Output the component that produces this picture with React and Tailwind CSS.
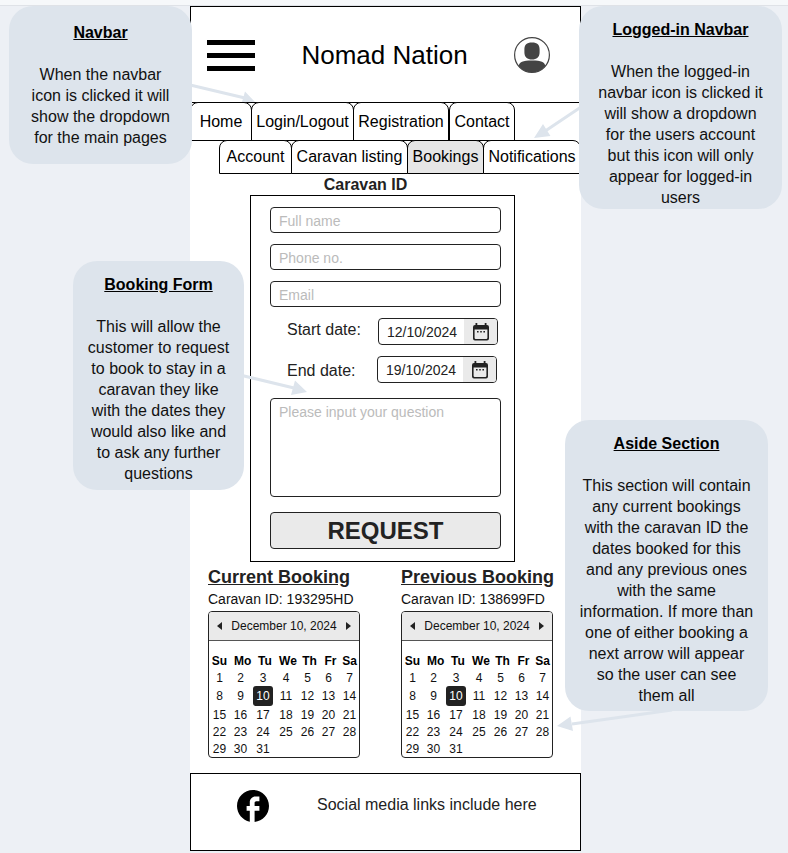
import React from "react";

const mainTabs = [
  { label: "Home", size: "w-[62px]" },
  { label: "Login/Logout", size: "w-[103px] -ml-px" },
  { label: "Registration", size: "w-[96px] -ml-px" },
  { label: "Contact", size: "w-[66px]" },
];

const accountTabs = [
  { label: "Account", size: "w-[73px]" },
  { label: "Caravan listing", size: "w-[117px] -ml-px" },
  { label: "Bookings", size: "w-[77px] -ml-px", active: true },
  { label: "Notifications", size: "w-[98px] -ml-px" },
];

const weekdays = ["Su", "Mo", "Tu", "We", "Th", "Fr", "Sa"];
const weeks = [
  [1, 2, 3, 4, 5, 6, 7],
  [8, 9, 10, 11, 12, 13, 14],
  [15, 16, 17, 18, 19, 20, 21],
  [22, 23, 24, 25, 26, 27, 28],
  [29, 30, 31, null, null, null, null],
];

function Tabs({ items, label, className }) {
  return (
    <nav aria-label={label} className={"-mt-px flex " + className}>
      {items.map((t) => (
        <a
          key={t.label}
          href="#"
          className={
            "flex shrink-0 items-center justify-center whitespace-nowrap rounded-t-lg border border-black text-base text-black " +
            t.size +
            (t.active ? " bg-[#e6e6e6]" : " bg-white")
          }
        >
          {t.label}
        </a>
      ))}
    </nav>
  );
}

function CalendarIcon() {
  return (
    <svg viewBox="0 0 16 18" className="h-[18px] w-4 shrink-0" aria-hidden="true">
      <path
        fill="#222"
        fillRule="evenodd"
        d="M2.500 0h1.800v2h7.400V0h1.800v2h.5a2 2 0 0 1 2 2v11.500a2 2 0 0 1-2 2H2a2 2 0 0 1-2-2V4a2 2 0 0 1 2-2h.5zM1.600 6.500v8.600c0 .5.3.8.8.8h11.200c.5 0 .8-.3.8-.8V6.500z"
      />
      <path fill="#222" d="M4 8h1.600v1.600H4zM7.200 8h1.600v1.600H7.200zM10.400 8h1.600v1.600h-1.600z" />
    </svg>
  );
}

function TextField({ label, type }) {
  return (
    <input
      type={type}
      aria-label={label}
      placeholder={label}
      className="h-[26px] w-full rounded border border-[#222] bg-white px-2 pt-0.5 text-sm text-[#222] outline-none placeholder:text-[#bbb]"
    />
  );
}

function DateField({ id, label, value, className }) {
  return (
    <div className={"flex justify-between pl-[17px] " + className}>
      <label htmlFor={id} className="text-base leading-6 text-[#222]">
        {label}
      </label>
      <div className="flex h-[27px] w-[120px] overflow-hidden rounded border border-[#222] bg-white">
        <input
          id={id}
          type="text"
          defaultValue={value}
          className="w-[85px] pl-2 text-sm text-[#222] outline-none"
        />
        <button
          type="button"
          aria-label={"Choose " + label}
          className="flex flex-1 items-center justify-center bg-[#eaeaea]"
        >
          <CalendarIcon />
        </button>
      </div>
    </div>
  );
}

function Arrow({ next }) {
  return (
    <svg viewBox="0 0 6 8" className="h-2 w-[6px]" aria-hidden="true">
      <path fill="#222" d={next ? "M1 0L6 4L1 8z" : "M5 0L0 4L5 8z"} />
    </svg>
  );
}

function Calendar() {
  return (
    <div className="rounded border border-[#222] bg-white text-xs text-[#111]">
      <div className="flex h-[29px] items-center justify-between rounded-t-[3px] border-b border-[#555] bg-[#eaeaea] px-2">
        <button type="button" aria-label="Previous month">
          <Arrow />
        </button>
        <span>December 10, 2024</span>
        <button type="button" aria-label="Next month">
          <Arrow next />
        </button>
      </div>
      <table className="mt-[11px] w-full table-fixed border-collapse text-center">
        <colgroup>
          <col className="w-[21px]" />
          <col className="w-[21px]" />
          <col className="w-[24px]" />
          <col className="w-[22px]" />
          <col className="w-[21px]" />
          <col className="w-[21px]" />
          <col className="w-[21px]" />
        </colgroup>
        <thead>
          <tr className="h-[17px]">
            {weekdays.map((d, i) => (
              <th
                key={d}
                className={
                  "p-0 leading-4 text-black " + (i > 0 && i < 6 ? "pl-1" : "")
                }
              >
                {d}
              </th>
            ))}
          </tr>
        </thead>
        <tbody>
          {weeks.map((w, r) => (
            <tr key={r} className={r === 1 ? "h-[20px]" : "h-[17px]"}>
              {w.map((d, i) => (
                <td key={i} className="p-0 leading-4">
                  {d === 10 ? (
                    <span className="mx-auto block w-5 rounded-[3px] bg-[#222] leading-5 text-white">
                      {d}
                    </span>
                  ) : (
                    d
                  )}
                </td>
              ))}
            </tr>
          ))}
        </tbody>
      </table>
    </div>
  );
}

function Booking({ title, caravan }) {
  return (
    <section className="w-[152px]">
      <h2 className="whitespace-nowrap text-lg font-bold leading-6 text-[#222] underline">
        {title}
      </h2>
      <p className="mb-[2px] whitespace-nowrap text-sm leading-5 text-[#111]">
        Caravan ID: {caravan}
      </p>
      <Calendar />
    </section>
  );
}

function Note({ title, className, children }) {
  return (
    <aside
      className={
        "absolute rounded-3xl bg-[#dde4ec] text-center text-base leading-[21px] text-[#111] " +
        className
      }
    >
      <h2 className="mb-[21px] font-bold leading-[21px] text-black underline">
        {title}
      </h2>
      <p>{children}</p>
    </aside>
  );
}

export default function App() {
  return (
    <div className="relative min-h-screen overflow-hidden bg-[#edf0f5] font-['Liberation_Sans',Arial,sans-serif]">
      <div className="h-[6px] border-b border-[#dfe2e7] bg-[#f6f8fa]" />

      <main className="ml-[190px] w-full max-w-[391px] bg-white">
        <header className="flex h-[97px] items-center justify-between border border-black pl-4 pr-[30px] pt-px">
          <button
            type="button"
            aria-label="Menu"
            className="flex w-12 flex-col gap-2"
          >
            <span className="h-[5px] bg-black" />
            <span className="h-[5px] bg-black" />
            <span className="h-[5px] bg-black" />
          </button>
          <h1 className="text-[26px] text-black">Nomad Nation</h1>
          <button type="button" aria-label="Account">
            <svg viewBox="0 0 36 36" className="block size-9">
              <circle
                cx="18"
                cy="18"
                r="17.4"
                fill="#fff"
                stroke="#444"
                strokeWidth="1.2"
              />
              <path
                fill="#444"
                d="M18 5.500c5.500 0 7.600 2.500 7.600 7v3c0 4.500-3 7-7.600 7s-7.600-2.500-7.600-7v-3c0-4.500 2.100-7 7.600-7zM4.500 29c1-3.800 4-5.500 13.500-5.500s12.500 1.700 13.500 5.500a17.500 17.500 0 0 1-27 0z"
              />
            </svg>
          </button>
        </header>

        <Tabs items={mainTabs} label="Main" className="h-[39px]" />
        <Tabs
          items={accountTabs}
          label="Account"
          className="ml-[29px] h-[34px]"
        />

        <h2 className="pr-10 text-center text-base font-bold leading-[21px] text-[#222]">
          Caravan ID
        </h2>

        <form className="ml-[60px] w-[265px] border border-black pb-3 pl-[19px] pr-[13px] pt-[11px]">
          <div className="flex flex-col gap-[11px]">
            <TextField label="Full name" type="text" />
            <TextField label="Phone no." type="tel" />
            <TextField label="Email" type="email" />
            <DateField
              id="start"
              label="Start date:"
              value="12/10/2024"
              className="items-start pr-[3px]"
            />
            <DateField
              id="end"
              label="End date:"
              value="19/10/2024"
              className="items-end pr-1"
            />
          </div>
          <textarea
            aria-label="Question"
            placeholder="Please input your question"
            className="mt-[15px] block h-[99px] w-full resize-none rounded border border-[#222] px-2 py-[3px] text-sm outline-none placeholder:text-[#bbb]"
          />
          <button
            type="button"
            className="mt-[15px] block h-[37px] w-full rounded border border-[#222] bg-[#eaeaea] text-2xl font-bold text-[#222]"
          >
            REQUEST
          </button>
        </form>

        <div className="flex justify-between pb-[15px] pl-[18px] pr-7 pt-[3px]">
          <Booking title="Current Booking" caravan="193295HD" />
          <Booking title="Previous Booking" caravan="138699FD" />
        </div>

        <footer className="flex h-[78px] items-start gap-12 border border-black px-[46px] pr-6 pt-4">
          <a href="#" aria-label="Facebook" className="shrink-0">
            <svg viewBox="2 2 20 20" className="block size-8">
              <path d="M22 12c0-5.520-4.480-10-10-10S2 6.480 2 12c0 4.840 3.440 8.870 8 9.800V15H8v-3h2V9.500C10 7.570 11.570 6 13.500 6H16v3h-2c-.55 0-1 .45-1 1v2h3v3h-3v6.950c5.050-.5 9-4.760 9-9.950z" />
            </svg>
          </a>
          <p className="text-base leading-[30px] text-[#222]">
            Social media links include here
          </p>
        </footer>
      </main>

      <svg
        width="788"
        height="853"
        viewBox="0 0 788 853"
        className="pointer-events-none absolute left-0 top-0"
        fill="#dde4ec"
        stroke="#dde4ec"
        strokeWidth="3"
        aria-hidden="true"
      >
        <path d="M188 84.500L245 98M584 105L546 130.500M240 375L294 388M672 710L572 724" />
        <path
          stroke="none"
          d="M245 91.500L255 102H242zM534 138L543 124L550.500 136zM307 392L295 380.500L291 395zM557 726L570.500 716.500L573 731z"
        />
      </svg>

      <Note title="Navbar" className="left-[9px] top-[6px] w-[183px] px-5 py-4">
        When the navbar icon is clicked it will show the dropdown for the main
        pages
      </Note>
      <Note
        title="Logged-in Navbar"
        className="left-[579px] top-[6px] w-[203px] px-4 pb-px pt-[13px]"
      >
        When the logged-in navbar icon is clicked it will show a dropdown for
        the users account but this icon will only appear for logged-in users
      </Note>
      <Note
        title="Booking Form"
        className="left-[73px] top-[261px] w-[171px] px-3 pb-[6px] pt-[13px]"
      >
        This will allow the customer to request to book to stay in a caravan
        they like with the dates they would also like and to ask any further
        questions
      </Note>
      <Note
        title="Aside Section"
        className="left-[565px] top-[420px] w-[203px] px-[14px] pb-[5px] pt-[13px]"
      >
        This section will contain any current bookings with the caravan ID the
        dates booked for this and any previous ones with the same information.
        If more than one of either booking a next arrow will appear so the user
        can see them all
      </Note>
    </div>
  );
}
